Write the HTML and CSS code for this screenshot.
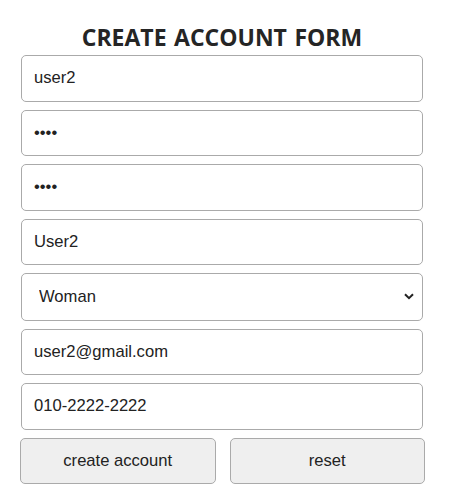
FILE: index.html
```html
<!DOCTYPE html>
<html lang="en">
<head>
<meta charset="utf-8">
<title>Create Account</title>
<link rel="stylesheet" href="styles.css">
</head>
<body>
<form class="form">
  <h1 class="title">CREATE ACCOUNT FORM</h1>
  <input class="field" type="text" value="user2">
  <input class="field" type="password" value="1234">
  <input class="field" type="password" value="1234">
  <input class="field" type="text" value="User2">
  <div class="select-wrap">
    <select class="field select">
      <option>Woman</option>
      <option>Man</option>
    </select>
    <svg class="chevron" width="10" height="7" viewBox="0 0 10 7"><path d="M1 1.2 L5 5.2 L9 1.2" fill="none" stroke="#222" stroke-width="2"/></svg>
  </div>
  <input class="field" type="text" value="user2@gmail.com">
  <input class="field" type="text" value="010-2222-2222">
  <div class="buttons">
    <button class="btn" type="button">create account</button>
    <button class="btn" type="reset">reset</button>
  </div>
</form>
</body>
</html>
```

FILE: styles.css
```css
html, body {
  margin: 0;
  padding: 0;
  background: #fff;
}

body {
  font-family: "Liberation Sans", Arial, sans-serif;
  color: #222;
}

.form {
  width: 402px;
  margin-left: 21px;
  display: flex;
  flex-direction: column;
  gap: 8px;
}

.title {
  margin: 21.5px 0 -4.5px 0;
  font-family: "Open Sans", "Noto Sans", sans-serif;
  font-weight: 700;
  font-size: 23px;
  line-height: 30px;
  text-align: center;
  color: #252525;
  word-spacing: 1.5px;
}

.field {
  box-sizing: border-box;
  width: 100%;
  height: 46.5px;
  margin: 0;
  padding: 0 12px;
  border: 1px solid #aaa;
  border-radius: 5px;
  background: #fff;
  font-family: "Liberation Sans", Arial, sans-serif;
  font-size: 16.6px;
  color: #222;
  outline: none;
}

.select-wrap {
  position: relative;
}

.select {
  appearance: none;
  -webkit-appearance: none;
  height: 47.5px;
  padding-left: 17px;
  display: block;
}

.chevron {
  position: absolute;
  right: 9px;
  top: 20px;
  pointer-events: none;
}

.buttons {
  display: flex;
  gap: 14px;
  margin: 0 -2px 0 -1px;
}

.btn {
  flex: 1;
  box-sizing: border-box;
  height: 46.5px;
  margin: 0;
  border: 1px solid #aaa;
  border-radius: 5px;
  background: #efefef;
  font-family: "Liberation Sans", Arial, sans-serif;
  font-size: 16.6px;
  color: #222;
}
```
